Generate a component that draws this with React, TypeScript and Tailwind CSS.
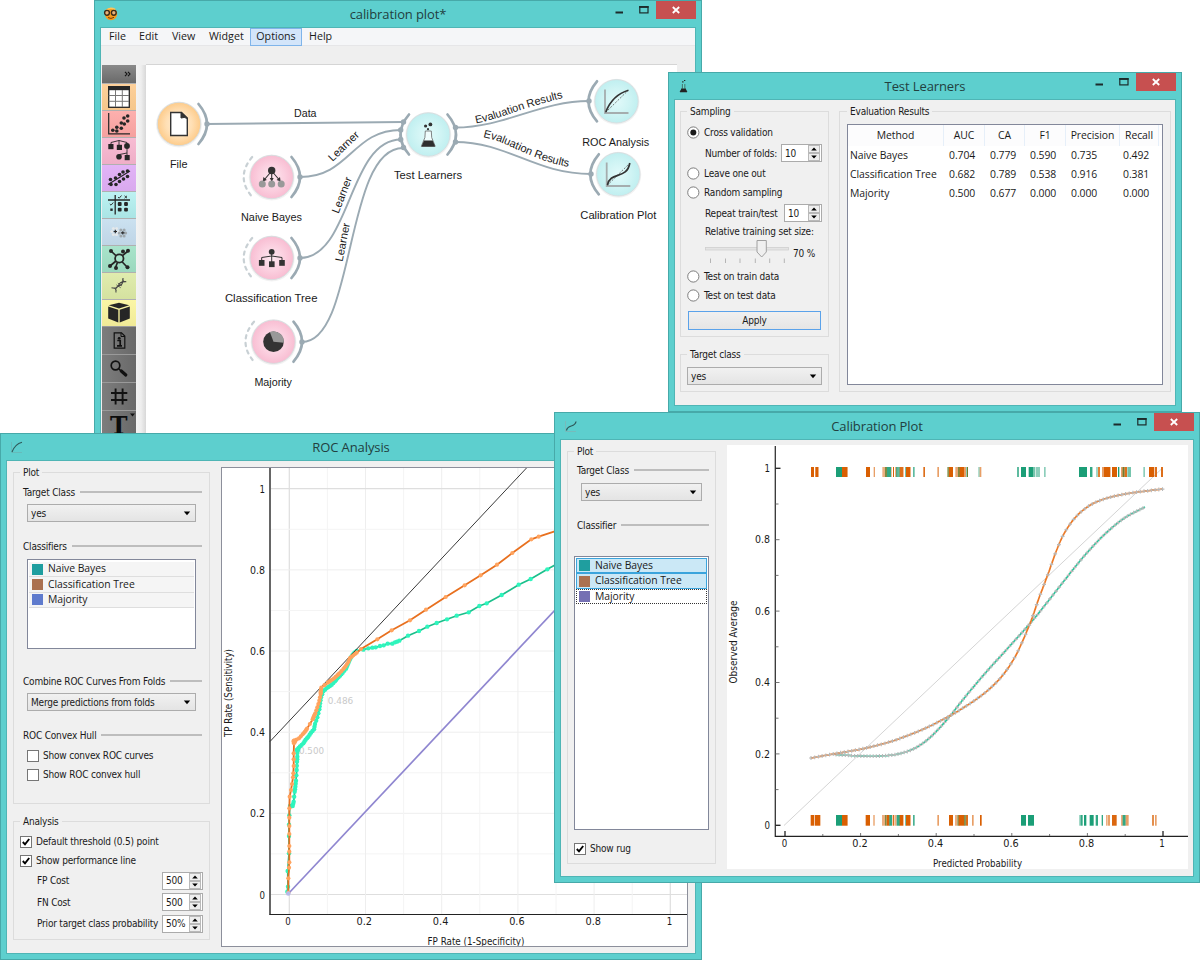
import React from "react";
import type { ReactNode } from "react";

type Pt = [number, number];

const UI = "font-['DejaVu_Sans_Condensed','Noto_Sans',sans-serif] text-[10px] tracking-[-0.19px] text-[#1a1a1a]";
const SEGOE = "font-['Open_Sans','Noto_Sans',sans-serif]";

/* ---------- generic window chrome ---------- */

function Controls() {
  return (
    <svg width="90" height="18" viewBox="0 0 90 18" className="block">
      <rect x="50" y="0" width="40" height="18" fill="#c75050" />
      <rect x="9.5" y="10.5" width="7.5" height="2" fill="#1c2b2b" />
      <rect x="33.8" y="5.7" width="8.2" height="6.2" fill="none" stroke="#1c2b2b" strokeWidth="1.2" />
      <rect x="33.2" y="5" width="9.4" height="1.9" fill="#1c2b2b" />
      <path d="M66.8 6 L73.2 12 M73.2 6 L66.8 12" stroke="#fff" strokeWidth="1.8" />
    </svg>
  );
}

function Window({ title, icon, frame, body, children }: { title: string; icon: ReactNode; frame: string; body: string; children: ReactNode }) {
  return (
    <section className={"absolute flex flex-col border border-[#47a9a9] bg-[#5dcfce] px-[5px] pb-[5px] " + frame}>
      <header className="flex h-[26px] shrink-0 items-start">
        <div className="w-[100px] pt-[5px] pl-[3px]">{icon}</div>
        <h1 className={"flex-1 pt-[3px] text-center text-[13px] leading-5 tracking-[-0.1px] text-[#22403f] " + SEGOE}>{title}</h1>
        <div className="flex w-[100px] justify-end">
          <Controls />
        </div>
      </header>
      <div className={"min-h-0 flex-1 border border-[#4fb5b5] bg-[#f0f0f0] " + body}>{children}</div>
    </section>
  );
}

/* ---------- form controls ---------- */

function Group({ title, className, legend, children }: { title: string; className: string; legend?: string; children: ReactNode }) {
  return (
    <fieldset className={"min-w-0 shrink-0 border border-[#dcdcdc] " + className}>
      <legend className={"h-[14px] px-[3px] leading-[16px] " + (legend ?? "")}>{title}</legend>
      {children}
    </fieldset>
  );
}

function Section({ title, className }: { title: string; className: string }) {
  return (
    <div className={"flex h-4 items-center gap-[5px] whitespace-nowrap " + className}>
      <span>{title}</span>
      <span className="h-[1.5px] flex-1 bg-[#bdbdbd]" />
    </div>
  );
}

function Combo({ value, className }: { value: string; className: string }) {
  return (
    <div className={"flex h-[18px] items-center justify-between border border-[#acacac] bg-gradient-to-b from-[#f1f1f1] to-[#e4e4e4] pr-[4px] pl-[3px] " + className}>
      <span className="whitespace-nowrap">{value}</span>
      <svg width="8" height="5" viewBox="0 0 8 5"><path d="M0.8 0.5 H7.2 L4 4.3 Z" fill="#000" /></svg>
    </div>
  );
}

function Spin({ value, width }: { value: string; width?: string }) {
  return (
    <div className={"flex h-[18px] shrink-0 items-center justify-between border border-[#ababab] bg-white pl-[3px] " + (width ?? "w-[41px]")}>
      <span>{value}</span>
      <svg width="13" height="16" viewBox="0 0 13 16" className="shrink-0">
        <rect x="0.5" y="0.5" width="11" height="7" fill="#eeeeee" stroke="#b9b9b9" />
        <rect x="0.5" y="8.5" width="11" height="7" fill="#eeeeee" stroke="#b9b9b9" />
        <path d="M3.2 5.6 H8.8 L6 2.6 Z M3.2 10.4 H8.8 L6 13.4 Z" fill="#000" />
      </svg>
    </div>
  );
}

function Check({ label, on, className }: { label: string; on?: boolean; className: string }) {
  return (
    <div className={"flex h-[19px] items-center gap-[4px] whitespace-nowrap " + className}>
      <svg width="12" height="12" viewBox="0 0 12 12">
        <rect x="0.5" y="0.5" width="11" height="11" fill="#fff" stroke="#767676" />
        {on && <path d="M2.8 6 L5 8.4 L9.2 3" fill="none" stroke="#000" strokeWidth="1.9" />}
      </svg>
      <span>{label}</span>
    </div>
  );
}

function Radio({ label, on, className }: { label: string; on?: boolean; className?: string }) {
  return (
    <div className={"flex h-[19px] items-center gap-[4px] whitespace-nowrap " + (className ?? "")}>
      <svg width="13" height="13" viewBox="0 0 13 13">
        <circle cx="6.3" cy="6.5" r="5.6" fill="#fff" stroke="#707070" strokeWidth="0.9" />
        {on && <circle cx="6.3" cy="6.5" r="3" fill="#1b1b1b" />}
      </svg>
      <span>{label}</span>
    </div>
  );
}

/* ---------- svg text ---------- */

function T({ x, y, w, size = 10.5, fill = "#1a1a1a", anchor = "middle", font = "'DejaVu Sans Condensed','Noto Sans',sans-serif", rotate, children }: {
  x: number; y: number; w?: number; size?: number; fill?: string; anchor?: "start" | "middle" | "end"; font?: string; rotate?: number; children: string;
}) {
  return (
    <text x={x} y={y} fontSize={size} fill={fill} textAnchor={anchor} fontFamily={font} letterSpacing="0" textLength={w} lengthAdjust="spacingAndGlyphs" transform={rotate === undefined ? undefined : `rotate(${rotate} ${x} ${y})`}>
      {children}
    </text>
  );
}

/* ---------- workflow canvas ---------- */

const ARIAL = "'Liberation Sans',Arial,sans-serif";
const EDGE = "#9baab3";

function NodeDisc({ x, y, kind }: { x: number; y: number; kind: "data" | "model" | "eval" }) {
  return (
    <g>
      <circle cx={x} cy={y + 0.5} r="23" fill="#000" opacity="0.05" />
      <circle cx={x} cy={y} r="21.7" fill={`url(#disc-${kind})`} stroke="#d6dcdf" strokeWidth="0.9" />
    </g>
  );
}

function Arc({ x, y, dir, dashed }: { x: number; y: number; dir: 1 | -1; dashed?: boolean }) {
  const ex = x - dir * 8.5;
  return (
    <path d={`M${ex} ${y - 20} Q${x + dir * 8.5} ${y} ${ex} ${y + 20}`} fill="none" stroke={dashed ? "#c8d0d4" : EDGE} strokeWidth={dashed ? 2.2 : 2.7} strokeLinecap="round" strokeDasharray={dashed ? "3.2 4.6" : undefined} />
  );
}

const links = [
  "M207 124 L403 122",
  "M300 177 C350 177 352 130 401 130",
  "M300 258 C351 258 348 139.5 401 139.5",
  "M302 342 C356 342 344 148 403 148",
  "M455 127.5 C505 127.5 540 101 589 101",
  "M455 142 C508 142 535 174 591 174",
];
const ports: Pt[] = [[207, 124], [300, 177], [300, 258], [302, 342], [403.5, 122], [400.7, 130], [400.7, 139.5], [403.5, 147.5], [455.5, 127.5], [455.5, 142], [589, 101], [591, 174]];

function Workflow() {
  return (
    <svg width="531" height="370" viewBox="146 65 531 370" className="block bg-white">
      <defs>
        <radialGradient id="disc-data"><stop offset="0" stopColor="#fff0dc" /><stop offset="0.6" stopColor="#ffdfb4" /><stop offset="1" stopColor="#fdcb8a" /></radialGradient>
        <radialGradient id="disc-model"><stop offset="0" stopColor="#fde8f0" /><stop offset="0.6" stopColor="#fbcfdf" /><stop offset="1" stopColor="#f8bdd2" /></radialGradient>
        <radialGradient id="disc-eval"><stop offset="0" stopColor="#e2fafa" /><stop offset="0.6" stopColor="#cff4f4" /><stop offset="1" stopColor="#c0eff0" /></radialGradient>
        <path id="eval-a" d="M476 123.5 C500 119 520 108 567 97" />
        <path id="eval-b" d="M483 137 C512 143 530 161 575 168" />
      </defs>
      <g fill="none" stroke={EDGE} strokeWidth="1.9">{links.map((d) => <path key={d} d={d} />)}</g>
      <Arc x={207} y={124} dir={1} />
      <Arc x={300} y={177} dir={1} />
      <Arc x={300} y={258} dir={1} />
      <Arc x={302} y={341.7} dir={1} />
      <Arc x={456} y={134.5} dir={1} />
      <Arc x={400.5} y={134.5} dir={-1} />
      <Arc x={588.5} y={101.3} dir={-1} />
      <Arc x={590.3} y={174.3} dir={-1} />
      <Arc x={243.7} y={177} dir={-1} dashed />
      <Arc x={243.7} y={258} dir={-1} dashed />
      <Arc x={245.5} y={341.7} dir={-1} dashed />
      {ports.map(([x, y]) => <circle key={x + "," + y} cx={x} cy={y} r="2.7" fill={EDGE} />)}

      <NodeDisc x={179} y={124} kind="data" />
      <path d="M170.7 112.5 H181.5 L187.3 118 V135.5 H170.7 Z" fill="#fff" stroke="#333" strokeWidth="1.4" />
      <path d="M181 112 L187.8 118.7 Q184 116.5 181 118 Z" fill="#333" stroke="#333" />

      <NodeDisc x={271.7} y={177} kind="model" />
      <path d="M271.7 171 V181 M271.7 171 L264.5 179.5 M271.7 171 L279 179.5" stroke="#333" strokeWidth="1.1" />
      <path d="M262.8 181.5 L263.4 177 L266.8 180 Z M280.6 181.5 L276.6 180 L280 177 Z M269.7 178 H273.7 L271.7 181.6 Z" fill="#333" />
      <circle cx="271.7" cy="170.5" r="3.7" fill="#333" />
      {[262.3, 271.7, 281.2].map((x) => <circle key={x} cx={x} cy={184} r="3.5" fill="#999" />)}

      <NodeDisc x={271.7} y={258} kind="model" />
      <path d="M271.7 252 V262 M261.7 261 V257.5 L271.7 256 L282 257.5 V261" fill="none" stroke="#333" strokeWidth="1" />
      <circle cx="271.7" cy="251.8" r="2.9" fill="#333" />
      {[258.9, 269, 279.2].map((x, i) => <rect key={x} x={x} y={i === 1 ? 261.3 : 260} width="5.6" height="5.8" fill="#333" />)}

      <NodeDisc x={273.5} y={341.7} kind="model" />
      <circle cx="273.5" cy="341.7" r="10.3" fill="#333" />
      <path d="M273.5 341.7 L269.9 332 A10.3 10.3 0 0 1 283.8 342.7 Z" fill="#999" />

      <NodeDisc x={428.3} y={134.5} kind="eval" />
      <path d="M425.3 131 L424.9 137.5 L421.5 145.8 Q421 146.5 422 146.5 H434.5 Q435.5 146.5 435 145.8 L431.7 137.5 L431.3 131 Z" fill="#effcfc" stroke="#666" strokeWidth="0.8" />
      <path d="M424 140.5 H432.6 L435.2 146.6 H421.4 Z" fill="#2e2e2e" />
      <circle cx="425.6" cy="126" r="1.6" fill="#333" /><circle cx="430.4" cy="124.4" r="1.9" fill="#333" /><circle cx="428" cy="129.2" r="1.1" fill="#333" />

      <NodeDisc x={616.5} y={101.3} kind="eval" />
      <path d="M605 89.5 V113 H628.5" fill="none" stroke="#a5adae" strokeWidth="1.8" />
      <path d="M605.5 112.5 L628 90.5" stroke="#555" strokeWidth="0.8" strokeDasharray="2 1.4" />
      <path d="M605.8 112 Q612.5 95 628.5 90.3" fill="none" stroke="#333" strokeWidth="1.7" />

      <NodeDisc x={618.3} y={174.3} kind="eval" />
      <path d="M606.7 162.5 V186 H630.3" fill="none" stroke="#a5adae" strokeWidth="1.8" />
      <path d="M607 185.5 L629.5 163.5" stroke="#555" strokeWidth="0.8" strokeDasharray="2 1.4" />
      <path d="M607.5 185 C610 171 627 180 629.8 163" fill="none" stroke="#333" strokeWidth="1.7" />

      <T x={178.7} y={168} w={17.5} size={11} font={ARIAL}>File</T>
      <T x={271.5} y={221} w={61} size={11} font={ARIAL}>Naive Bayes</T>
      <T x={271.2} y={302} w={92.5} size={11} font={ARIAL}>Classification Tree</T>
      <T x={273.2} y={386} w={37.5} size={11} font={ARIAL}>Majority</T>
      <T x={428} y={179} w={68} size={11} font={ARIAL}>Test Learners</T>
      <T x={615.7} y={145.5} w={67} size={11} font={ARIAL}>ROC Analysis</T>
      <T x={618.3} y={218.5} w={76} size={11} font={ARIAL}>Calibration Plot</T>
      <T x={305.3} y={117} w={22.5} size={11} font={ARIAL}>Data</T>
      <T x={332.5} y={162} w={38} size={11} font={ARIAL} anchor="start" rotate={-44}>Learner</T>
      <T x={338.5} y={214} w={38} size={11} font={ARIAL} anchor="start" rotate={-69}>Learner</T>
      <T x={342.5} y={262} w={39} size={11} font={ARIAL} anchor="start" rotate={-79}>Learner</T>
      <text fontSize="11" fill="#1a1a1a" fontFamily={ARIAL}><textPath href="#eval-a" textLength="91">Evaluation Results</textPath></text>
      <text fontSize="11" fill="#1a1a1a" fontFamily={ARIAL}><textPath href="#eval-b" textLength="91">Evaluation Results</textPath></text>
    </svg>
  );
}

/* ---------- tool dock ---------- */

const K = "#262626";

const tools: { bg: string; icon: ReactNode }[] = [
  { bg: "from-[#fdd09a] to-[#f5c68b]", icon: <g><rect x="6.7" y="2.7" width="20.6" height="20.6" fill="#fff" stroke={K} strokeWidth="1.3" /><rect x="6" y="2" width="22" height="4.2" fill={K} /><path d="M6.7 11.5 H27 M6.7 17.3 H27 M13.5 6 V23 M20.3 6 V23" stroke="#777" strokeWidth="1" /></g> },
  { bg: "from-[#fdb0ae] to-[#f5a09e]", icon: <g><path d="M6.7 2 V22.8 H28" fill="none" stroke={K} strokeWidth="1.2" />{[[10.8, 19.3], [14.8, 16.3], [14.8, 20], [19.3, 12], [19.3, 17.3], [22, 7], [22.3, 13], [25.7, 10], [25.7, 5]].map(([x, y]) => <circle key={x + "-" + y} cx={x} cy={y} r="1.8" fill={K} />)}</g> },
  { bg: "from-[#f7bcd3] to-[#efaec7]", icon: <g><path d="M9 8 V4.5 L17 2.5 L25 4.5 V8 M17 2.5 V8 M25 11 V15 L17.5 16.5 V19 M25 15 V20" fill="none" stroke={K} strokeWidth="0.9" /><rect x="6.3" y="6" width="5.2" height="5.2" fill={K} /><rect x="14.8" y="6.8" width="5.2" height="5.2" fill={K} /><circle cx="25" cy="8" r="2.9" fill={K} /><circle cx="17" cy="18.7" r="2.8" fill={K} /><rect x="22.7" y="17" width="5" height="5.2" fill={K} /></g> },
  { bg: "from-[#e2b4f7] to-[#d9a9ee]", icon: <g><path d="M6 19.5 L28 6" stroke={K} strokeWidth="1.2" />{[[8.5, 14.5], [9, 19.5], [13.5, 13], [14, 19.5], [17.5, 9.5], [17.5, 16.5], [21, 7], [21.5, 14], [25.5, 6], [25.5, 11.5]].map(([x, y]) => <circle key={x + "-" + y} cx={x} cy={y} r="1.8" fill={K} />)}</g> },
  { bg: "from-[#bdf2f2] to-[#aae5e5]", icon: <g><path d="M6 8 H28 M13.2 3 V22.5" stroke={K} strokeWidth="1.3" />{[[17.7, 12], [24, 12], [17.7, 17.7], [24, 17.7]].map(([x, y]) => <rect key={x + "-" + y} x={x - 1.9} y={y - 1.9} width="3.8" height="3.8" rx="1" fill={K} />)}<path d="M16 5 L17.2 6.2 L19.5 3.5 M22.5 3.8 L25 6.2 M25 3.8 L22.5 6.2 M7.8 12 L9 13.2 L11.3 10.5" fill="none" stroke={K} strokeWidth="0.9" /><rect x="8.3" y="16.5" width="2.4" height="2.4" fill={K} /></g> },
  { bg: "from-[#cbe1f0] to-[#bfd5e6]", icon: <g>{[[13, 12.5], [20.5, 14]].map(([cx, cy]) => [0, 1, 2, 3, 4, 5].map((k) => <circle key={cx + "-" + k} cx={cx + 3.2 * Math.cos(k * 1.047)} cy={cy + 3.5 * Math.sin(k * 1.047)} r="1.5" fill={cx === 13 ? "#e4e8ea" : "#9fa8ad"} />))}<path d="M13.3 10.8 V14.2 M11.6 12.5 H15 M20.8 12.2 V15.6 M19 13.9 H22.5" stroke={K} strokeWidth="1.1" /></g> },
  { bg: "from-[#a9e4cb] to-[#9bd8be]", icon: <g><path d="M17 12.5 L9 5 M17 12.5 L26 5 M17 12.5 L8 20 M17 12.5 L25 21 M17 12.5 L13.5 21.5" stroke={K} strokeWidth="1.7" /><circle cx="17.3" cy="12.5" r="4.2" fill="#a9e4cb" stroke={K} strokeWidth="1.8" />{[[9, 5], [26, 4.7], [8, 20], [25.5, 21.3], [14, 22], [21, 5.5]].map(([x, y]) => <circle key={x + "-" + y} cx={x} cy={y} r="2" fill={K} />)}</g> },
  { bg: "from-[#e0ecae] to-[#d5e2a0]", icon: <g fill="none" stroke="#444" strokeWidth="1.1"><path d="M9.5 14.8 C20 17 12.5 8 24.3 8.7 M14 19.5 C12 9 22 17 21 5" /><path d="M12.5 15.5 L14.5 17.5 M14.3 11.8 L18.8 14.8 M15.8 10 L20 13 M20 6.5 L22.3 8.5" strokeWidth="0.7" /></g> },
  { bg: "from-[#fbf6a6] to-[#f0ea97]", icon: <g><path d="M17 2.8 L27.3 5.3 L17 8.6 L6.7 5.3 Z" fill={K} /><path d="M6.2 6.6 L16.3 9.8 V22.6 L6.2 18.5 Z M27.8 6.6 L17.7 9.8 V22.6 L27.8 18.5 Z" fill={K} /></g> },
];

const grayTools: { h: string; icon: ReactNode }[] = [
  { h: "h-7", icon: <g><path d="M12.2 5.8 H19.5 L22.8 9 V21.2 H12.2 Z" fill="none" stroke="#111" strokeWidth="1.2" /><path d="M19 5.5 V9.5 H23" fill="none" stroke="#111" /><circle cx="17.2" cy="11.3" r="1.4" fill="#111" /><path d="M15.3 13.5 H18.2 V18.5 M15 18.8 H20" fill="none" stroke="#111" strokeWidth="1.7" /></g> },
  { h: "h-7", icon: <g><circle cx="13.5" cy="10.5" r="4.3" fill="none" stroke="#111" strokeWidth="1.7" /><path d="M16.8 13.8 L19 16" stroke="#111" strokeWidth="1.6" /><path d="M19.3 16 L23.8 20" stroke="#111" strokeWidth="3.2" strokeLinecap="round" /></g> },
  { h: "h-7", icon: <path d="M13.6 5.5 V21.5 M20.6 5.5 V21.5 M9 10 H25.3 M9 17 H25.3" stroke="#111" strokeWidth="1.9" /> },
  { h: "h-7", icon: <g><text x="16.8" y="23" fontSize="25" fontWeight="bold" fill="#0c0c0c" textAnchor="middle" fontFamily="'DejaVu Serif',serif" textLength="17.5" lengthAdjust="spacingAndGlyphs">T</text><path d="M28 2.5 H33 L30.5 5.5 Z" fill="#111" /></g> },
];

function Dock() {
  return (
    <div className="flex w-[34px] shrink-0 flex-col overflow-hidden">
      <div className="flex h-[18px] shrink-0 items-center justify-end bg-gradient-to-b from-[#8a8a8a] to-[#6a6a6a] pr-[5px]">
        <svg width="7" height="6" viewBox="0 0 7 6"><path d="M1 0.8 L3 3 L1 5.2 M4 0.8 L6 3 L4 5.2" fill="none" stroke="#111" strokeWidth="1.1" /></svg>
      </div>
      {tools.map((t) => (
        <div key={t.bg} className={"h-[27px] shrink-0 border-t border-[#b0b0b0] bg-gradient-to-b " + t.bg}>
          <svg width="34" height="26" viewBox="0 0 34 26" className="block">{t.icon}</svg>
        </div>
      ))}
      {grayTools.map((t, i) => (
        <div key={i} className={"shrink-0 border-t border-[#9a9a9a] bg-gradient-to-r from-[#7d7d7d] to-[#696969] " + t.h}>
          <svg width="34" height="27" viewBox="0 0 34 27" className="block">{t.icon}</svg>
        </div>
      ))}
    </div>
  );
}

function CanvasWindow() {
  return (
    <Window
      title="calibration plot*"
      frame="left-[94px] top-0 w-[608px] h-[440px]"
      body="flex flex-col"
      icon={
        <svg width="18" height="16" viewBox="0 0 18 16" className="block">
          <circle cx="8" cy="8" r="6.2" fill="#f59a1e" /><path d="M3 4.5 Q7 0.5 12 3.5" stroke="#ffc65c" strokeWidth="1.6" fill="none" />
          <circle cx="4" cy="6.8" r="2.4" fill="#e8b078" stroke="#3a2a1a" strokeWidth="1.4" /><circle cx="10.8" cy="6.8" r="2.4" fill="#e8b078" stroke="#3a2a1a" strokeWidth="1.4" />
          <path d="M5 11.5 Q8 13.5 11 11.3" stroke="#7a3c08" fill="none" strokeWidth="1" />
        </svg>
      }
    >
      <nav className={"flex h-[18px] shrink-0 items-center border-b border-[#e6e6e8] bg-[#f5f6f8] text-[10.7px] text-[#1a1a1a] " + SEGOE}>
        <span className="w-[33px] pl-[8px]">File</span>
        <span className="w-[32px] pl-[5px]">Edit</span>
        <span className="w-[37px] pl-[6px]">View</span>
        <span className="w-[47px] pl-[6px]">Widget</span>
        <span className="flex h-[18px] w-[52px] items-center justify-center border border-[#7fb4ea] bg-[#d3e5fa]">Options</span>
        <span className="pl-[7px]">Help</span>
      </nav>
      <div className="flex min-h-0 flex-1 overflow-hidden bg-[#efefef] pt-[19px] pl-px">
        <Dock />
        <div className="w-[10px] shrink-0 bg-gradient-to-r from-[#f3f3f3] via-[#eeeeee] to-[#d8d8d8]" />
        <div className="-mt-px border-t border-[#d5d5d5]"><Workflow /></div>
      </div>
    </Window>
  );
}

/* ---------- test learners ---------- */

const results = [
  ["Naive Bayes", "0.704", "0.779", "0.590", "0.735", "0.492"],
  ["Classification Tree", "0.682", "0.789", "0.538", "0.916", "0.381"],
  ["Majority", "0.500", "0.677", "0.000", "0.000", "0.000"],
];
const COLS = "grid grid-cols-[96px_41px_40px_41px_54px_39px]";

function TestLearners() {
  return (
    <Window
      title="Test Learners"
      frame="left-[668px] top-[72px] w-[514px] h-[340px]"
      body={"flex gap-[10px] pl-[5px] pt-[4px] " + UI}
      icon={
        <svg width="16" height="18" viewBox="0 0 16 18" className="block">
          <path d="M5.4 6 V10 L3 14 H10 L7.8 10 V6" fill="#7fc" fillOpacity="0.3" stroke="#3b5b5b" strokeWidth="0.8" /><path d="M4.5 10.5 H8.5 L10.2 14 H2.8 Z" fill="#222" /><path d="M5.2 3.8 H6.5 M7 2.5 H8.3" stroke="#222" strokeWidth="1.2" />
        </svg>
      }
    >
      <div className="flex w-[149px] shrink-0 flex-col">
        <Group title="Sampling" className="h-[233px] px-[6px]">
          <Radio label="Cross validation" on className="mt-[5px]" />
          <div className="flex h-[22px] items-center justify-between pl-[18px]"><span>Number of folds:</span><Spin value="10" /></div>
          <Radio label="Leave one out" />
          <Radio label="Random sampling" />
          <div className="flex h-[22px] items-center justify-between pl-[18px]"><span>Repeat train/test</span><Spin value="10" width="w-[38px]" /></div>
          <div className="h-4 pl-[18px] leading-4 whitespace-nowrap">Relative training set size:</div>
          <div className="flex h-[27px] items-center gap-[4px] pl-[18px]">
            <svg width="84" height="27" viewBox="705 238 84 27" className="block shrink-0">
              <rect x="705.5" y="245.5" width="83" height="2.5" fill="#e4e4e4" stroke="#cfcfcf" strokeWidth="0.8" />
              <path d="M757 238.5 H766.3 V250 L761.7 255 L757 250 Z" fill="#efefef" stroke="#a0a0a0" strokeWidth="1" />
              {[710.5, 725.5, 740, 755.3, 769.7, 784.3].map((x) => <path key={x} d={`M${x} 256.5 V261`} stroke="#b5b5b5" />)}
            </svg>
            <span className="whitespace-nowrap">70 %</span>
          </div>
          <Radio label="Test on train data" />
          <Radio label="Test on test data" />
          <div className="mt-[6px] mr-px ml-px flex h-[19px] items-center justify-center border border-[#5aa2ea] bg-gradient-to-b from-[#f0f0f0] to-[#e5e5e5]">Apply</div>
        </Group>
        <Group title="Target class" className="mt-[10px] h-[45px] px-[6px]">
          <Combo value="yes" className="mt-[6px]" />
        </Group>
      </div>
      <Group title="Evaluation Results" className="h-[288px] w-[332px] px-[7px]">
        <div className={"mt-[6px] h-[261px] border border-[#82879a] bg-white text-[10.4px] tracking-[-0.05px] " + SEGOE}>
          <div className={"h-[21px] items-stretch bg-[#fcfcfd] " + COLS}>
            {["Method", "AUC", "CA", "F1", "Precision", "Recall"].map((h) => (
              <span key={h} className="flex items-center justify-center border-r border-[#e6eff9]">{h}</span>
            ))}
          </div>
          {results.map((r) => (
            <div key={r[0]} className={"h-[19px] items-center whitespace-nowrap " + COLS}>
              {r.map((c, i) => <span key={i} className={i === 0 ? "pl-[2px]" : i === 5 ? "pl-[3px]" : "pl-[5px]"}>{c}</span>)}
            </div>
          ))}
        </div>
      </Group>
    </Window>
  );
}

/* ---------- ROC analysis ---------- */

const upper = (p: Pt): Pt => [260 + p[0] / 3, 430 + p[1] / 3];
const lower = (p: Pt): Pt => [260 + p[0] / 3, 690 + p[1] / 3];

const orange: Pt[] = [
  ...([[85, 608], [85, 565], [87, 533], [88, 517], [88, 485], [88, 468], [88, 432], [88, 408], [88, 383], [88, 355], [89, 320], [93, 300], [96, 282], [99, 262], [100, 250], [101, 228], [101, 208], [101, 190], [102, 160], [103, 152], [117, 145], [128, 133], [135, 125], [141, 116], [158, 88], [162, 78], [166, 70], [172, 52], [178, 32], [182, 12]] as Pt[]).map(lower),
  ...([[182, 785], [184, 773], [203, 758], [212, 752], [222, 745], [232, 736], [238, 730], [250, 717], [257, 708], [265, 696], [270, 684], [280, 676], [290, 668], [303, 657], [352, 628], [395, 601], [450, 571], [498, 539], [557, 501], [614, 466], [662, 436], [711, 404], [757, 369], [814, 328], [836, 320], [900, 299]] as Pt[]).map(upper),
];
const green: Pt[] = [
  ...([[82, 605], [84, 590], [83, 543], [87, 490], [87, 438], [87, 404], [88, 376], [90, 348], [98, 348], [101, 335], [104, 305], [106, 290], [108, 272], [110, 240], [111, 215], [112, 200], [112, 178], [120, 169], [130, 160], [137, 149], [145, 140], [153, 128], [162, 118], [165, 102], [172, 82], [178, 58], [180, 40], [183, 22], [190, 4]] as Pt[]).map(lower),
  ...([[200, 774], [208, 769], [215, 764], [225, 754], [232, 745], [240, 737], [248, 728], [258, 716], [263, 704], [268, 692], [274, 680], [281, 670], [290, 663], [310, 659], [325, 655], [337, 653], [347, 652], [360, 648], [371, 646], [383, 641], [397, 641], [405, 637], [411, 635], [418, 632], [444, 617], [477, 603], [502, 590], [530, 579], [561, 568], [590, 557], [626, 547], [658, 528], [680, 520], [725, 495], [776, 464], [812, 447], [862, 418], [900, 397]] as Pt[]).map(upper),
];
const line = (pts: Pt[]) => pts.map((p, i) => (i ? "L" : "M") + p[0].toFixed(1) + " " + p[1].toFixed(1)).join(" ");

/* Adds a point halfway along every segment that lies in the given band of y. */
function withMidpoints(pts: Pt[], top: number, bottom: number): Pt[] {
  return pts.flatMap((p, i) => {
    const n = pts[i + 1];
    return n && p[1] < bottom && n[1] > top ? [p, [(p[0] + n[0]) / 2, (p[1] + n[1]) / 2] as Pt] : [p];
  });
}
const orangeDots = withMidpoints(orange, 650, 745);
const greenDots = withMidpoints(green, 650, 808);

function RocPlot() {
  const ticks = [0, 1, 2, 3, 4, 5, 6, 7, 8, 9, 10];
  return (
    <svg width="465" height="478" viewBox="222 468 465 478" className="block bg-white">
      {ticks.map((t) => (
        <g key={t} stroke={t % 10 === 0 ? "#dedede" : t % 2 === 0 ? "#eeeeee" : "#f4f4f4"} strokeWidth={t % 10 === 0 ? 1.2 : 1}>
          <path d={`M${289.3 + t * 38.1} 468 V914`} />
          <path d={`M271 ${894.5 - t * 40.58} H688`} />
        </g>
      ))}
      <T x={340.5} y={704} w={25.5} size={9.5} fill="#c9c9c9">0.486</T>
      <T x={311.5} y={753.5} w={25} size={9.5} fill="#c9c9c9">0.500</T>
      <path d="M288.5 893.5 L620 541" stroke="#8f86d0" strokeWidth="1.7" />
      <path d={line(green)} fill="none" stroke="#1bbf8b" strokeWidth="1.7" />
      {greenDots.map((p, i) => <circle key={i} cx={p[0]} cy={p[1]} r="2.2" fill="#2ff5bd" />)}
      <path d="M270 741.5 L526.5 468" stroke="#222" strokeWidth="0.9" />
      <path d={line(orange)} fill="none" stroke="#e8701f" strokeWidth="1.8" />
      {orangeDots.map((p, i) => <circle key={i} cx={p[0]} cy={p[1]} r="2.1" fill="#ffa35e" />)}
      <circle cx="294.3" cy="741.3" r="2.8" fill="#ffa35e" /><circle cx="297.5" cy="750" r="2.6" fill="#2ff5bd" />
      <circle cx="288.3" cy="893.5" r="2.3" fill="#b5b9ea" />
      <path d="M270 468 V914.5" stroke="#333" strokeWidth="1.5" />
      <path d="M269.3 914.5 H688" stroke="#222" strokeWidth="1.2" />
      {["0", "0.2", "0.4", "0.6", "0.8", "1"].map((s, i) => (
        <g key={s}>
          <T x={288 + i * 76.3} y={924.5} w={s.length > 1 ? 15.5 : 5.5}>{s}</T>
          <T x={265} y={898.5 - i * 81.15} w={s.length > 1 ? 15 : 5.5} anchor="end">{s}</T>
        </g>
      ))}
      <T x={476} y={945} w={97}>FP Rate (1-Specificity)</T>
      <T x={232} y={693} w={88} rotate={-90}>TP Rate (Sensitivity)</T>
    </svg>
  );
}

const classifiers = [
  { name: "Naive Bayes", sw: "bg-[#1f9e9f]" },
  { name: "Classification Tree", sw: "bg-[#ab7150]" },
  { name: "Majority", sw: "bg-[#5f7bcd]" },
];

function Roc() {
  return (
    <Window
      title="ROC Analysis"
      frame="left-0 top-[433px] w-[702px] h-[527px]"
      body={"flex gap-[11px] pl-[6px] pt-[4px] " + UI}
      icon={<svg width="18" height="18" viewBox="0 0 18 18" className="block"><path d="M2.5 3 V13.5 H13" fill="none" stroke="#6bb" strokeWidth="1" /><path d="M3 13 Q6 5 13 3.2" fill="none" stroke="#2f5a5a" strokeWidth="1.1" /></svg>}
    >
      <div className="flex w-[197px] shrink-0 flex-col">
        <Group title="Plot" legend="-ml-[3px]" className="h-[339px] pr-[7px] pl-[9px]">
          <Section title="Target Class" className="mt-[5px]" />
          <Combo value="yes" className="mt-[4px] ml-[4px] w-[169px]" />
          <Section title="Classifiers" className="mt-[16px]" />
          <div className="mt-[5px] ml-[4px] h-[90px] w-[169px] border border-[#82879a] bg-white px-px pt-[2px] text-[10.4px] tracking-[-0.05px]">
            {classifiers.map((c) => (
              <div key={c.name} className={"flex h-[15.4px] items-center gap-[5px] border-b border-[#dedede] bg-[#f5f5f5] pl-[3px] " + SEGOE}>
                <span className={"h-[11px] w-[11px] " + c.sw} /><span>{c.name}</span>
              </div>
            ))}
          </div>
          <Section title="Combine ROC Curves From Folds" className="mt-[24px]" />
          <Combo value="Merge predictions from folds" className="mt-[4px] ml-[4px] w-[169px]" />
          <Section title="ROC Convex Hull" className="mt-[16px]" />
          <Check label="Show convex ROC curves" className="mt-[3px] ml-[4px]" />
          <Check label="Show ROC convex hull" className="ml-[4px]" />
        </Group>
        <Group title="Analysis" className="mt-[10px] h-[126px] px-[6px]">
          <Check label="Default threshold (0.5) point" on className="mt-[4px]" />
          <Check label="Show performance line" on className="" />
          <div className="flex h-[21.5px] items-center justify-between pl-[17px]"><span>FP Cost</span><Spin value="500" /></div>
          <div className="flex h-[21.5px] items-center justify-between pl-[17px]"><span>FN Cost</span><Spin value="500" /></div>
          <div className="flex h-[21.5px] items-center justify-between pl-[17px] whitespace-nowrap"><span>Prior target class probability</span><Spin value="50%" /></div>
        </Group>
      </div>
      <div className="mt-[2px] h-[480px] w-[467px] border border-[#8c8f9b]"><RocPlot /></div>
    </Window>
  );
}

/* ---------- calibration plot ---------- */

function densify(pts: Pt[]): Pt[] {
  const out: Pt[] = [];
  for (let i = 0; i < pts.length - 1; i++) {
    const a = pts[Math.max(0, i - 1)], b = pts[i], c = pts[i + 1], d = pts[Math.min(pts.length - 1, i + 2)];
    for (let k = 0; k < 12; k++) {
      const t = k / 12;
      const f = (j: 0 | 1) => 0.5 * (2 * b[j] + (c[j] - a[j]) * t + (2 * a[j] - 5 * b[j] + 4 * c[j] - d[j]) * t * t + (3 * b[j] - a[j] - 3 * c[j] + d[j]) * t * t * t);
      out.push([f(0), f(1)]);
    }
  }
  out.push(pts[pts.length - 1]);
  return out;
}

function sampleX(pts: Pt[], step: number): Pt[] {
  const out: Pt[] = [];
  let i = 0;
  for (let x = pts[0][0]; x <= pts[pts.length - 1][0]; x += step) {
    while (i < pts.length - 2 && pts[i + 1][0] < x) i++;
    const [a, b] = [pts[i], pts[i + 1]];
    out.push([x, a[1] + ((b[1] - a[1]) * (x - a[0])) / (b[0] - a[0] || 1)]);
  }
  return out;
}

const treeCurve = densify([[811, 758], [833, 754], [860, 749.3], [887, 742.7], [907, 735.8], [927, 727.5], [950, 715.8], [963, 708], [977, 698.8], [990, 688.5], [1001.7, 676.5], [1011.7, 662.5], [1020, 647], [1031, 621], [1038.3, 600], [1048.3, 573.3], [1056.7, 550], [1065, 532], [1076.7, 516], [1091.7, 504.3], [1110, 497.3], [1133, 492.7], [1163, 489]]);
const bayesCurve = densify([[836, 754.6], [860, 756], [880, 756], [896.7, 754.3], [912, 749.6], [925, 741.7], [936.7, 731], [950, 716], [966.7, 695], [986.7, 671.5], [1008, 648], [1033, 620], [1053, 595], [1076.7, 565], [1090, 549.5], [1105, 534], [1124, 518.3], [1145, 507]]);

const G = "#1b9e77", O = "#d95f02", M = "#6f7d2f";
type Rug = [number, number, string, number];
const topRug: Rug[] = [
  [123, 132, O, 1], [135, 138, O, 0.7], [138, 144, O, 1], [144, 147, O, 0.5], [198, 216, G, 1], [216, 232, O, 1], [232, 234, O, 0.5], [288, 300, O, 1], [311, 315, O, 0.6], [337, 345, O, 0.5], [345, 351, M, 0.9], [351, 363, G, 0.9], [363, 366, O, 0.4], [369, 372, O, 1], [375, 382, O, 0.5], [378, 390, G, 0.7], [389, 399, O, 0.9], [399, 402, O, 0.4], [405, 409, G, 0.6], [408, 420, O, 1], [420, 423, O, 0.5], [429, 434, G, 0.7], [460, 465, O, 0.9], [502, 507, O, 0.6], [532, 538, M, 0.8], [537, 549, O, 1], [556, 565, O, 0.55], [564, 570, M, 0.9], [569, 583, O, 1], [583, 588, O, 0.6], [588, 591, G, 0.5], [591, 594, M, 1], [625, 629, G, 0.5], [629, 634, O, 0.6],
  [741, 747, G, 0.7], [753, 768, G, 1], [775, 777, G, 0.5], [777, 790, G, 1], [790, 796, G, 0.6], [798, 810, G, 0.5], [822, 827, G, 0.5], [927, 951, G, 1], [960, 966, G, 0.9], [966, 969, G, 0.4], [978, 984, G, 0.4], [984, 990, O, 0.8], [996, 1001, O, 0.6], [1001, 1020, O, 1], [1020, 1023, O, 0.4], [1026, 1041, O, 1], [1044, 1048, G, 1], [1053, 1059, O, 0.6], [1058, 1064, M, 1], [1064, 1071, O, 0.9], [1072, 1083, G, 0.6], [1120, 1125, G, 0.5], [1137, 1152, O, 1], [1154, 1161, O, 0.9], [1173, 1179, O, 0.9],
];
const bottomRug: Rug[] = [
  [272, 283, O, 1], [285, 301, O, 1], [348, 366, G, 1], [366, 381, O, 1], [381, 384, O, 0.6], [437, 450, O, 1], [460, 464, O, 0.6], [486, 495, O, 0.5], [495, 500, M, 0.9], [500, 509, O, 1], [508, 516, G, 0.9], [518, 523, O, 0.9], [525, 530, O, 0.5], [530, 540, G, 0.9], [539, 549, O, 1], [549, 552, O, 0.4], [555, 559, G, 0.6], [558, 570, O, 1], [570, 573, O, 0.5], [579, 584, G, 0.8], [652, 657, O, 0.6], [687, 699, O, 1], [705, 712, O, 0.5], [712, 718, M, 0.8], [716, 733, O, 1], [732, 738, M, 0.8], [738, 744, O, 0.9], [756, 761, O, 0.6], [780, 785, O, 1], [903, 918, G, 1], [924, 942, G, 1], [1078, 1083, G, 0.6], [1083, 1088, G, 0.9], [1092, 1099, G, 1], [1109, 1121, G, 1], [1127, 1134, G, 0.9], [1145, 1149, G, 0.9], [1158, 1163, O, 0.5], [1164, 1170, O, 0.6], [1176, 1190, O, 0.95], [1203, 1209, O, 0.5], [1208, 1217, G, 0.9], [1217, 1226, O, 0.6], [1296, 1302, O, 0.7], [1305, 1310, O, 0.6],
];

function Plus({ pts }: { pts: Pt[] }) {
  return <path d={pts.map(([x, y]) => `M${(x - 1.9).toFixed(1)} ${y.toFixed(1)}h3.8M${x.toFixed(1)} ${(y - 1.9).toFixed(1)}v3.8`).join("")} stroke="#b9b9b9" strokeWidth="1.1" />;
}

function CalibrationChart() {
  return (
    <svg width="461" height="424" viewBox="727 445 461 424" className="block shrink-0 bg-white">
      <path d="M784 825.5 L1162 468.5" stroke="#cfcfcf" strokeWidth="0.9" />
      {topRug.map(([a, b, c, o], i) => <rect key={i} x={770 + a / 3} y={467} width={(b - a) / 3} height={10} fill={c} opacity={o} />)}
      {bottomRug.map(([a, b, c, o], i) => <rect key={i} x={720 + a / 3} y={815} width={(b - a) / 3} height={10.7} fill={c} opacity={o} />)}
      <path d={line(bayesCurve)} fill="none" stroke="#22c79a" strokeWidth="1.6" />
      <Plus pts={sampleX(bayesCurve, 3.1)} />
      <path d={line(treeCurve)} fill="none" stroke="#ee7a26" strokeWidth="1.7" />
      <Plus pts={sampleX(treeCurve, 3.7)} />
      <path d="M775.3 446 V837" stroke="#333" strokeWidth="1.3" />
      <path d="M775 836.4 H1188" stroke="#222" strokeWidth="1.2" />
      {[0, 1, 2, 3, 4, 5, 6, 7, 8, 9, 10].map((t) => (
        <g key={t} stroke={t % 10 ? "#666" : "#222"} strokeWidth={t % 10 ? 0.9 : 1.3}>
          <path d={`M${785 + t * 37.8} 836 v${t % 10 === 0 ? -5 : t % 2 ? -2 : -3}`} />
          <path d={`M775.5 ${825.3 - t * 35.7} h${t % 10 === 0 ? 5 : t % 2 ? 3 : 4}`} />
        </g>
      ))}
      {["0", "0.2", "0.4", "0.6", "0.8", "1"].map((s, i) => (
        <g key={s}>
          <T x={784.5 + i * 75.5} y={847} w={s.length > 1 ? 15.5 : 5.5}>{s}</T>
          <T x={770} y={829 - i * 71.4} w={s.length > 1 ? 15 : 5.5} anchor="end">{s}</T>
        </g>
      ))}
      <T x={977.5} y={867.3} w={89}>Predicted Probability</T>
      <T x={737} y={642} w={83} rotate={-90}>Observed Average</T>
    </svg>
  );
}

function Calibration() {
  return (
    <Window
      title="Calibration Plot"
      frame="left-[554px] top-[412px] w-[646px] h-[471px]"
      body={"flex items-start gap-[11px] pl-[6px] " + UI}
      icon={<svg width="18" height="18" viewBox="0 0 18 18" className="block"><path d="M2.5 3 V13.5 H13" fill="none" stroke="#7bb" strokeWidth="1" /><path d="M3.5 12.5 C4.5 6 12 10 13 3.5" fill="none" stroke="#2f5a5a" strokeWidth="1.3" /></svg>}
    >
      <Group title="Plot" className="mt-[4px] h-[420px] w-[149px] px-[6px]">
        <Section title="Target Class" className="mt-[4px] ml-[3px]" />
        <Combo value="yes" className="mt-[5px] ml-[7px] w-[121px]" />
        <Section title="Classifier" className="mt-[16px] ml-[3px]" />
        <div className={"mt-[23px] h-[274px] w-[135px] border border-[#82879a] bg-white p-px text-[10.4px] tracking-[-0.05px] " + SEGOE}>
          <div className="flex h-[15.4px] items-center gap-[5px] border border-[#3ba4dc] bg-[#cbe8f6] pl-[2px]"><span className="h-[11px] w-[11px] bg-[#1f9e9f]" /><span>Naive Bayes</span></div>
          <div className="flex h-[15.4px] items-center gap-[5px] border border-[#3ba4dc] bg-[#cbe8f6] pl-[2px]"><span className="h-[11px] w-[11px] bg-[#ab7150]" /><span>Classification Tree</span></div>
          <div className="flex h-[15.4px] items-center gap-[5px] border border-dotted border-[#333] pl-[2px]"><span className="h-[11px] w-[11px] bg-[#7570b3]" /><span>Majority</span></div>
        </div>
        <Check label="Show rug" on className="mt-[9px]" />
      </Group>
      <div className="pt-[5px]"><CalibrationChart /></div>
    </Window>
  );
}

export default function App() {
  return (
    <main className="relative h-[960px] w-[1200px] overflow-hidden bg-white">
      <CanvasWindow />
      <Roc />
      <TestLearners />
      <Calibration />
    </main>
  );
}
